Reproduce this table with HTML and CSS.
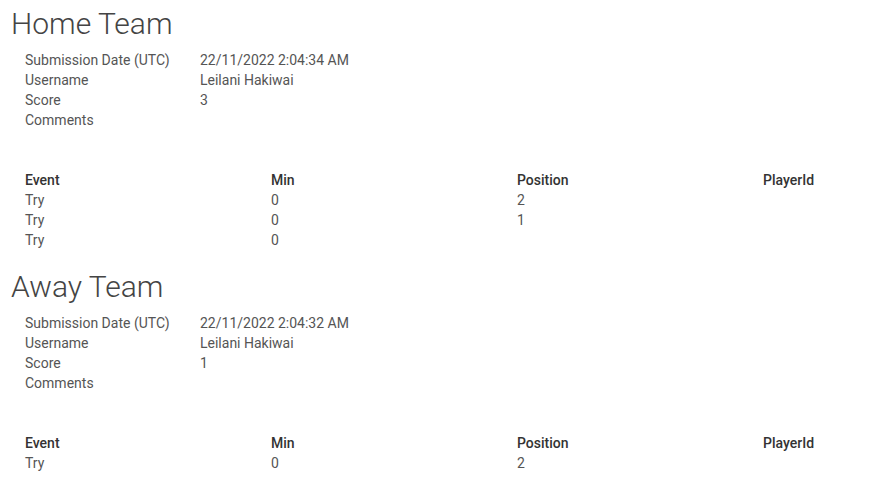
FILE: index.html
```html
<!DOCTYPE html>
<html>
<head>
<meta charset="utf-8">
<link rel="stylesheet" href="styles.css">
</head>
<body>
<section class="team">
  <h2 class="team-title">Home Team</h2>
  <div class="info">
    <div class="label">Submission Date (UTC)</div><div class="value">22/11/2022 2:04:34 AM</div>
    <div class="label">Username</div><div class="value">Leilani Hakiwai</div>
    <div class="label">Score</div><div class="value">3</div>
    <div class="label">Comments</div><div class="value"></div>
  </div>
  <div class="events">
    <div class="th">Event</div><div class="th">Min</div><div class="th">Position</div><div class="th">PlayerId</div>
    <div>Try</div><div>0</div><div>2</div><div></div>
    <div>Try</div><div>0</div><div>1</div><div></div>
    <div>Try</div><div>0</div><div></div><div></div>
  </div>
</section>
<section class="team">
  <h2 class="team-title">Away Team</h2>
  <div class="info">
    <div class="label">Submission Date (UTC)</div><div class="value">22/11/2022 2:04:32 AM</div>
    <div class="label">Username</div><div class="value">Leilani Hakiwai</div>
    <div class="label">Score</div><div class="value">1</div>
    <div class="label">Comments</div><div class="value"></div>
  </div>
  <div class="events">
    <div class="th">Event</div><div class="th">Min</div><div class="th">Position</div><div class="th">PlayerId</div>
    <div>Try</div><div>0</div><div>2</div><div></div>
  </div>
</section>
</body>
</html>
```
FILE: styles.css
```css
html, body {
  margin: 0;
  padding: 0;
  background: #fff;
}
body {
  font-family: Roboto, "Liberation Sans", sans-serif;
  font-size: 14px;
  line-height: 20px;
  color: #555;
  padding-top: 6px;
}
.team {
  display: flex;
  flex-direction: column;
  padding-bottom: 19px;
}
.team-title {
  margin: 0 0 0 11px;
  font-size: 30px;
  line-height: 36px;
  font-weight: 300;
  color: #444;
}
.info {
  display: grid;
  grid-template-columns: 175px auto;
  grid-auto-rows: 20px;
  margin: 8px 0 0 25px;
}
.events {
  display: grid;
  grid-template-columns: 246px 246px 246px auto;
  grid-auto-rows: 20px;
  margin: 40px 0 0 25px;
}
.th {
  font-weight: 500;
  color: #333;
}
```
